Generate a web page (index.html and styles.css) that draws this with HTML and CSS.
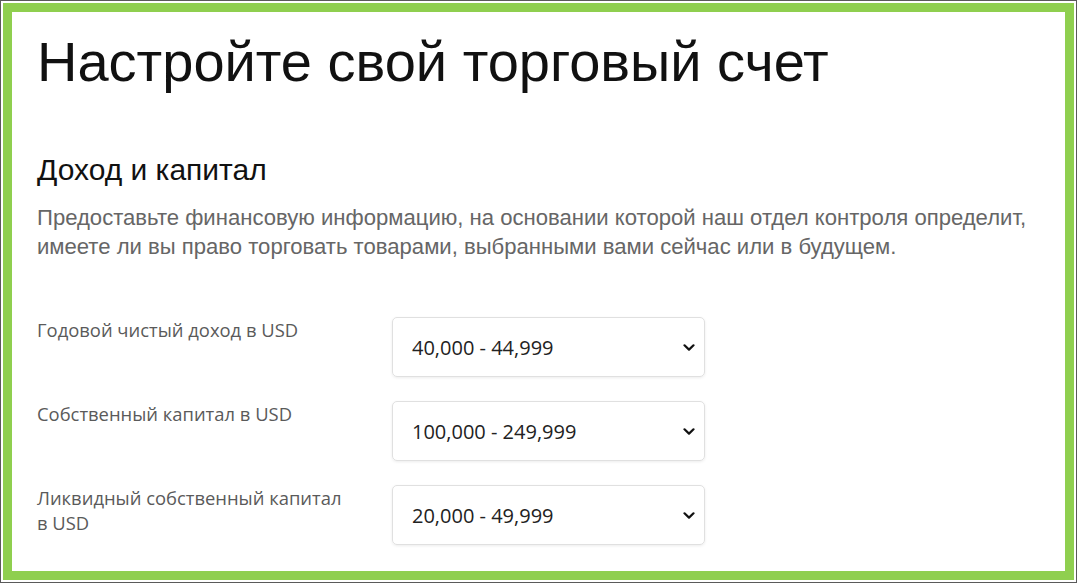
FILE: index.html
```html
<!DOCTYPE html>
<html lang="ru">
<head>
<meta charset="utf-8">
<link rel="stylesheet" href="styles.css">
</head>
<body>
<div class="frame">
  <div class="inner">
    <h1 class="title">Настройте свой торговый счет</h1>
    <h2 class="section">Доход и капитал</h2>
    <p class="desc">Предоставьте финансовую информацию, на основании которой наш отдел контроля определит, имеете ли вы право торговать товарами, выбранными вами сейчас или в будущем.</p>
    <div class="rows">
      <div class="row">
        <div class="label">Годовой чистый доход в USD</div>
        <div class="select"><span>40,000 - 44,999</span><svg class="chev" viewBox="0 0 12 7" width="12" height="7"><path d="M1.5 1.3 L6 5.6 L10.5 1.3" fill="none" stroke="#111" stroke-width="2.2" stroke-linecap="round" stroke-linejoin="round"/></svg></div>
      </div>
      <div class="row">
        <div class="label">Собственный капитал в USD</div>
        <div class="select"><span>100,000 - 249,999</span><svg class="chev" viewBox="0 0 12 7" width="12" height="7"><path d="M1.5 1.3 L6 5.6 L10.5 1.3" fill="none" stroke="#111" stroke-width="2.2" stroke-linecap="round" stroke-linejoin="round"/></svg></div>
      </div>
      <div class="row">
        <div class="label">Ликвидный собственный капитал в USD</div>
        <div class="select"><span>20,000 - 49,999</span><svg class="chev" viewBox="0 0 12 7" width="12" height="7"><path d="M1.5 1.3 L6 5.6 L10.5 1.3" fill="none" stroke="#111" stroke-width="2.2" stroke-linecap="round" stroke-linejoin="round"/></svg></div>
      </div>
    </div>
  </div>
</div>
</body>
</html>
```

FILE: styles.css
```css
html, body {
  margin: 0;
  padding: 0;
  background: #fff;
}
.frame {
  width: 1077px;
  height: 583px;
  box-sizing: border-box;
  border: 1px solid #5a5a5a;
  padding: 2px;
  background: #fff;
}
.inner {
  height: 100%;
  box-sizing: border-box;
  border: 9px solid #8fcf4f;
  padding: 18px 0 0 25px;
  overflow: hidden;
}
.title {
  margin: 0;
  font-family: "Liberation Sans", Arial, sans-serif;
  font-weight: normal;
  font-size: 56px;
  line-height: 64px;
  color: #111;
}
.section {
  margin: 58px 0 0;
  font-family: "Liberation Sans", Arial, sans-serif;
  font-weight: normal;
  font-size: 30px;
  line-height: 36px;
  color: #111;
}
.desc {
  margin: 15px 0 0;
  font-family: "Liberation Sans", Arial, sans-serif;
  font-size: 22.1px;
  line-height: 29px;
  color: #666;
}
.rows {
  margin-top: 56px;
  display: flex;
  flex-direction: column;
  gap: 24px;
}
.row {
  display: flex;
  align-items: flex-start;
}
.label {
  width: 310px;
  margin-right: 45px;
  font-family: "Open Sans", sans-serif;
  font-size: 18.4px;
  line-height: 25px;
  color: #5a5a5a;
}
.select {
  width: 313px;
  height: 60px;
  box-sizing: border-box;
  border: 1px solid #e0e0e0;
  border-radius: 5px;
  box-shadow: 0 1px 3px rgba(0,0,0,0.08);
  display: flex;
  align-items: center;
  justify-content: space-between;
  padding: 0 9px 0 19px;
  font-family: "Open Sans", sans-serif;
  font-size: 20px;
  color: #222;
}
.chev {
  display: block;
}
```
